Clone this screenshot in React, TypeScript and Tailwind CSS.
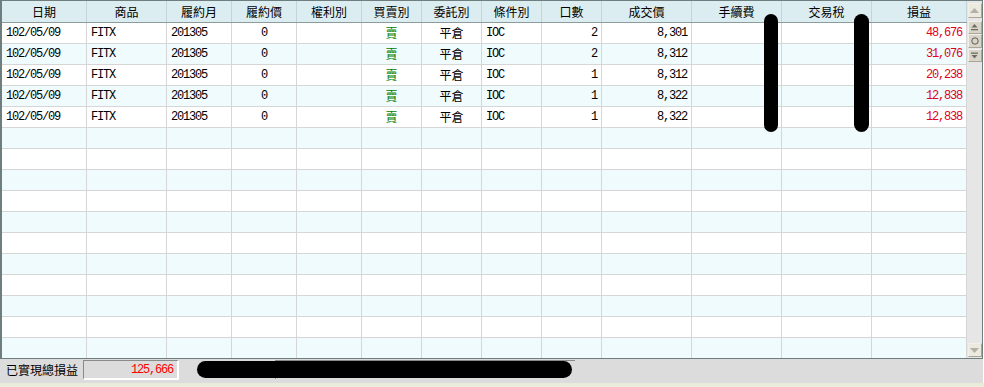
const cols = [
  { title: '日期', w: 'w-[85px]' },
  { title: '商品', w: 'w-[80px]' },
  { title: '履約月', w: 'w-[65px]' },
  { title: '履約價', w: 'w-[65px]' },
  { title: '權利別', w: 'w-[65px]' },
  { title: '買賣別', w: 'w-[60px]' },
  { title: '委託別', w: 'w-[60px]' },
  { title: '條件別', w: 'w-[60px]' },
  { title: '口數', w: 'w-[60px]' },
  { title: '成交價', w: 'w-[90px]' },
  { title: '手續費', w: 'w-[90px]' },
  { title: '交易稅', w: 'w-[90px]' },
  { title: '損益', w: 'w-[95px]' },
];

const trades = [
  { qty: '2', price: '8,301', pl: '48,676' },
  { qty: '2', price: '8,312', pl: '31,076' },
  { qty: '1', price: '8,312', pl: '20,238' },
  { qty: '1', price: '8,322', pl: '12,838' },
  { qty: '1', price: '8,322', pl: '12,838' },
];

const mono = "font-['Liberation_Mono',monospace] text-[12px] tracking-[-1.2px]";
const cjk = "font-['Noto_Sans_CJK_TC',sans-serif] text-[12px]";

function Cell({
  w,
  align = 'left',
  children,
}: {
  w: string;
  align?: 'left' | 'center' | 'right';
  children?: React.ReactNode;
}) {
  const a =
    align === 'center' ? 'justify-center' : align === 'right' ? 'justify-end pr-[4px]' : 'justify-start pl-[4px]';
  return <div className={`${w} shrink-0 flex items-center h-full border-r border-[#d6d6d6] ${a}`}>{children}</div>;
}

function Row({ idx, trade }: { idx: number; trade?: (typeof trades)[number] }) {
  const bg = idx % 2 === 0 ? 'bg-white' : 'bg-[#effbfd]';
  const border = idx === 15 ? 'h-[20px]' : 'h-[21px] border-b border-[#d6d6d6]';
  return (
    <div className={`flex ${bg} ${border}`}>
      <Cell w={cols[0].w}>{trade && <span className={mono}>102/05/09</span>}</Cell>
      <Cell w={cols[1].w}>{trade && <span className={mono}>FITX</span>}</Cell>
      <Cell w={cols[2].w}>{trade && <span className={mono}>201305</span>}</Cell>
      <Cell w={cols[3].w} align="center">{trade && <span className={mono}>0</span>}</Cell>
      <Cell w={cols[4].w} />
      <Cell w={cols[5].w} align="center">{trade && <span className={`${cjk} text-[#008000]`}>賣</span>}</Cell>
      <Cell w={cols[6].w} align="center">{trade && <span className={cjk}>平倉</span>}</Cell>
      <Cell w={cols[7].w}>{trade && <span className={mono}>IOC</span>}</Cell>
      <Cell w={cols[8].w} align="right">{trade && <span className={mono}>{trade.qty}</span>}</Cell>
      <Cell w={cols[9].w} align="right">{trade && <span className={mono}>{trade.price}</span>}</Cell>
      <Cell w={cols[10].w} />
      <Cell w={cols[11].w} />
      <Cell w={cols[12].w} align="right">
        {trade && <span className={`${mono} text-[#e0001b]`}>{trade.pl}</span>}
      </Cell>
    </div>
  );
}

function ScrollBtn({ children, className = '' }: { children: React.ReactNode; className?: string }) {
  return (
    <div
      className={`mx-auto w-[14px] flex items-center justify-center border border-t-[#f2f0ea] border-l-[#f2f0ea] border-b-[#a9a598] border-r-[#a9a598] ${className}`}
    >
      {children}
    </div>
  );
}

export default function App() {
  const rows = Array.from({ length: 16 }, (_, i) => i);
  return (
    <div className="relative w-[984px] h-[387px] bg-white text-black leading-none overflow-hidden">
      <div className="w-[983px] h-[359px] flex border-l-2 border-t border-r border-b border-[#6e7d7d]">
        <div className="w-[965px] shrink-0 flex flex-col">
          <div className="flex h-[22px] bg-[#dcedf1] border-b border-[#8c9c9c]">
            {cols.map((c) => (
              <div
                key={c.title}
                className={`${c.w} shrink-0 flex items-center justify-center border-r border-[#c3d5d9] ${cjk}`}
              >
                {c.title}
              </div>
            ))}
          </div>
          {rows.map((i) => (
            <Row key={i} idx={i} trade={trades[i]} />
          ))}
        </div>
        <div className="w-[15px] shrink-0 bg-[#e6e6e6] flex flex-col pt-[2px] pb-[1px]">
          <ScrollBtn className="h-[15px] bg-[#ece9df]">
            <svg width="9" height="5" viewBox="0 0 9 5">
              <path d="M0 5 L4.5 0 L9 5 Z" fill="#b2b0a8" />
            </svg>
          </ScrollBtn>
          <ScrollBtn className="h-[13px] mt-[3px] bg-[#d9d5c9]">
            <svg width="7" height="7" viewBox="0 0 7 7">
              <path d="M3.5 0 L6.5 3.5 L0.5 3.5 Z" fill="#6f6d66" />
              <rect x="0" y="5" width="7" height="1.3" fill="#6f6d66" />
            </svg>
          </ScrollBtn>
          <ScrollBtn className="h-[14px] bg-[#d9d5c9]">
            <svg width="8" height="8" viewBox="0 0 8 8">
              <circle cx="4" cy="4" r="3.2" fill="none" stroke="#5e5c56" strokeWidth="1" />
            </svg>
          </ScrollBtn>
          <ScrollBtn className="h-[13px] mt-[1px] bg-[#d9d5c9]">
            <svg width="7" height="7" viewBox="0 0 7 7">
              <rect x="0" y="0.5" width="7" height="1.3" fill="#6f6d66" />
              <path d="M0.5 3 L6.5 3 L3.5 6.5 Z" fill="#6f6d66" />
            </svg>
          </ScrollBtn>
          <div className="flex-1" />
          <ScrollBtn className="h-[14px] bg-[#ece9df]">
            <svg width="9" height="5" viewBox="0 0 9 5">
              <path d="M0 0 L9 0 L4.5 5 Z" fill="#b2b0a8" />
            </svg>
          </ScrollBtn>
        </div>
      </div>

      <div className="h-[24px] w-[983px] bg-[#dcdcdc] flex items-start">
        <div className={`${cjk} w-[83px] h-[20px] mt-[1px] pl-[6px] flex items-center`}>已實現總損益</div>
        <div className="w-[96px] h-[20px] mt-[1px] flex items-center justify-end pr-[4px] border-t border-l border-[#8a8a8a] border-b-2 border-r-2 border-b-white border-r-white bg-[#dcdcdc]">
          <span className={`${mono} text-[#ff0000]`}>125,666</span>
        </div>
        <div className="ml-[96px] w-[300px] h-[19px] mt-[1px] border-t border-l border-[#8a8a8a]" />
      </div>
      <div className="h-[4px] bg-[#e9ecda]" />

      {/* redaction marks */}
      <div className="absolute left-[764px] top-[14px] w-[14px] h-[118px] rounded-full bg-black" />
      <div className="absolute left-[854px] top-[14px] w-[15px] h-[118px] rounded-full bg-black" />
      <div className="absolute left-[197px] top-[361px] w-[375px] h-[17px] rounded-full bg-black" />
    </div>
  );
}
